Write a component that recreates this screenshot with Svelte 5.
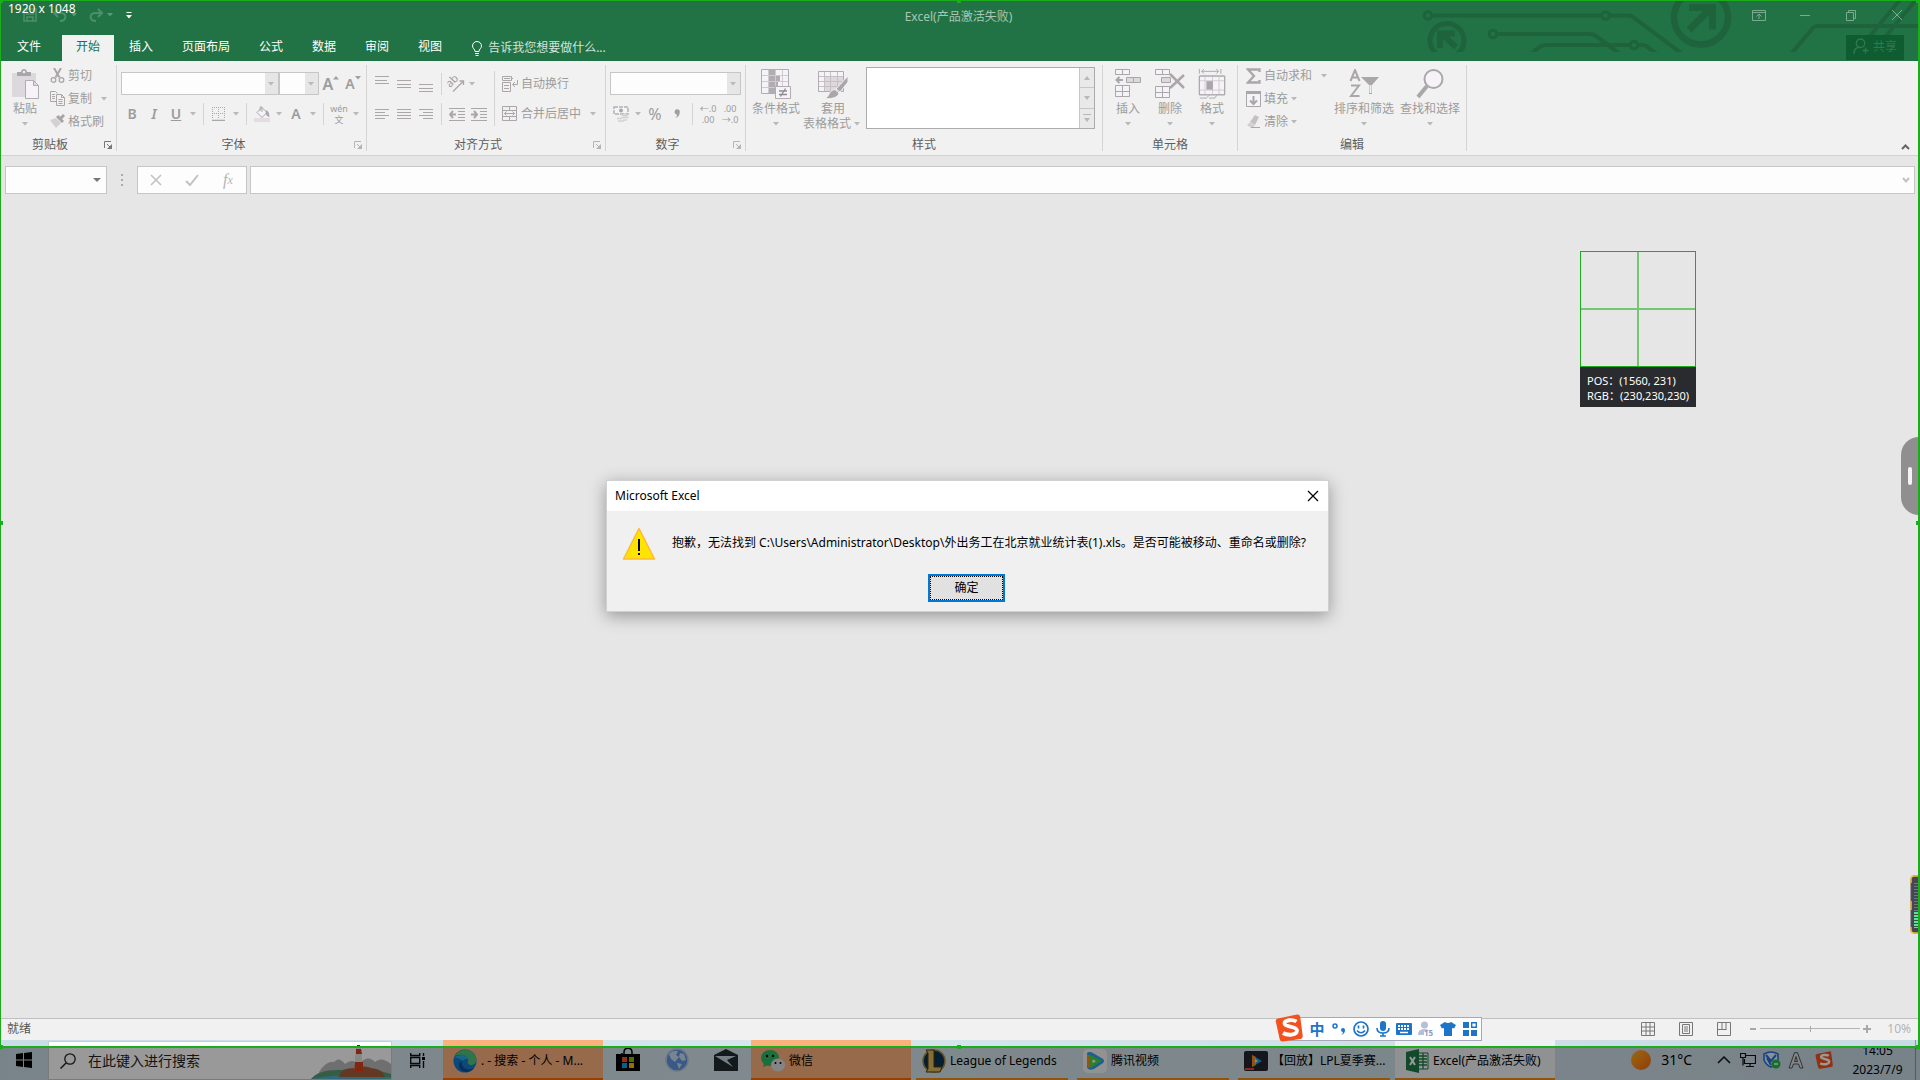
<script>
	const tabs = ['插入', '页面布局', '公式', '数据', '审阅', '视图'];

	let zoom = $state(50);
</script>

{#snippet caret()}
	<svg class="caret" width="12" height="4" viewBox="0 0 12 4"><path d="M3 0h6L6 3.6z" /></svg>
{/snippet}

{#snippet launcher(on)}
	<button class="launcher" class:on aria-label="对话框启动器">
		<svg width="8" height="8" viewBox="0 0 8 8"><path d="M.5 7V.5H7M3 3l3.5 3.5" /><path class="tip" d="M8 3v5H3z" /></svg>
	</button>
{/snippet}

{#snippet sogou(size)}
	<svg width={size} height={size} viewBox="0 0 28 28">
		<path d="M3 4.5 22 .6q2.600-.4 3.200 2.200l2.500 19q.3 2.600-2.200 3.200L8 27.500q-2.700.4-3.300-2.200L.8 7.500q-.4-2.500 2.200-3z" fill="#f4511e" />
		<path d="M21.500 7.500c-4-2.500-12-1.500-12 2 0 4 12.500 2 12.500 7 0 4.500-9 5.500-14 2.500" fill="none" stroke="#fff" stroke-width="3.800" />
	</svg>
{/snippet}

{#snippet lines(ys, xs = [0, 0, 0])}
	<svg width="14" height="22" viewBox="0 0 14 22" class="stroke">
		{#each ys as y, i}
			<path d="M{xs[i] < 0 ? -xs[i] : 0} {y}.5H{xs[i] > 0 ? 14 - xs[i] : 14}" />
		{/each}
	</svg>
{/snippet}

<div class="desktop">
	<div class="window">
		<header>
			<svg class="circuit" width="520" height="52" viewBox="0 0 520 52">
				<g fill="none" stroke="#1e633c" stroke-width="4">
					<circle cx="28" cy="15.500" r="3.800" stroke-width="3" />
					<path d="M32 15.500h169M210 15.500h18q4 0 7 3l48 36" />
					<circle cx="205.500" cy="15.500" r="3.800" stroke-width="3" />
					<circle cx="93" cy="34" r="3.800" stroke-width="3" />
					<path d="M97 34h92q4 0 7 2l24 18M131 54l7-6q4-3 8-3h84M238 45h4q4 0 7 3l8 6" />
					<circle cx="234" cy="45" r="3.800" stroke-width="3" />
					<circle cx="47" cy="40.500" r="17" stroke-width="5" />
					<path d="M56 47 42 34M40 48V33.500h15" stroke-width="6" />
					<circle cx="301" cy="17.500" r="27" stroke-width="6.500" />
					<path d="M289 30l22-22M289 7.500h23.500v22" stroke-width="7" />
					<path d="M391 54l21-25q2-3 6-3h102M470 36 500 0M486 36 516 0" />
				</g>
			</svg>
			<div class="titlebar">
				<div class="qat">
					<button aria-label="保存">
						<svg width="14" height="14" viewBox="0 0 14 14" class="dim"><path d="M1 1h12v12H1zM3.500 1v5h7V1M4 13V9h6v4" stroke-width="1.500" /></svg>
					</button>
					<button aria-label="撤消">
						<svg width="16" height="14" viewBox="0 0 16 14" class="dim"><path d="M6 1 2 5l4 4M2 5h7c6 0 6 8-1 8" stroke-width="2" /></svg>
						{@render caret()}
					</button>
					<button aria-label="恢复">
						<svg width="16" height="14" viewBox="0 0 16 14" class="dim"><path d="M10 1l4 4-4 4M14 5H7c-6 0-6 8 1 8" stroke-width="2" /></svg>
						{@render caret()}
					</button>
					<button class="customize" aria-label="自定义快速访问工具栏">
						<svg width="6" height="7" viewBox="0 0 6 7"><path d="M.5 0h5v1h-5zM0 3h6L3 6.500z" fill="#fff" /></svg>
					</button>
				</div>
				<h1>Excel(产品激活失败)</h1>
				<div class="controls">
					<button aria-label="功能区显示选项">
						<svg width="14" height="12" viewBox="0 0 14 12"><path d="M.5 1.500h13v10H.5zM.5 3.500h13M7 10V5M4.500 7.500 7 5l2.500 2.500" /></svg>
					</button>
					<button aria-label="最小化">
						<svg width="14" height="12" viewBox="0 0 14 12"><path d="M2 6.500h10" /></svg>
					</button>
					<button aria-label="向下还原">
						<svg width="14" height="12" viewBox="0 0 14 12"><path d="M2.500 3.500h7v8h-7zM4.500 3.500v-2h7v8h-2" /></svg>
					</button>
					<button aria-label="关闭">
						<svg width="14" height="12" viewBox="0 0 14 12"><path d="M2 1l10 10M12 1 2 11" /></svg>
					</button>
				</div>
			</div>
			<nav>
				<button class="tab file">文件</button>
				<button class="tab active">开始</button>
				{#each tabs as tab}
					<button class="tab">{tab}</button>
				{/each}
				<button class="tell">
					<svg width="12" height="15" viewBox="0 0 12 15"><path d="M4 10.500C4 8 1.500 7.500 1.500 5a4.500 4.500 0 0 1 9 0c0 2.500-2.500 3-2.500 5.500zM4 12.500h4M4.500 14.500h3" fill="none" stroke="#fff" /></svg>
					告诉我您想要做什么...
				</button>
				<button class="share">
					<svg width="16" height="17" viewBox="0 0 16 17"><path d="M7.500 1a4 4 0 0 1 0 8.500 4 4 0 0 1 0-8.500zM1 16c0-4 2-6.500 5-6.500M12.500 9.500v6M9.500 12.500h6" /></svg>
					共享
				</button>
			</nav>
		</header>

		<div class="ribbon">
			<section class="group clipboard">
				<div class="body">
					<button class="big" disabled>
						<svg width="30" height="30" viewBox="0 0 30 30">
							<path d="M2 4h24v24H2z" fill="#dcd8dc" />
							<path d="M7 7V3h4c0-4 6-4 6 0h4v4z" fill="#aaa6aa" /><circle cx="14" cy="3" r="1.300" fill="#f1f1f1" />
							<path d="M15.500 11.500h8l5 5v13h-13zM23.500 11.500v5h5" fill="#f6f3f8" stroke="#b0acb0" />
						</svg>
						<span>粘贴</span>
						<span class="drop-row">{@render caret()}</span>
					</button>
					<div class="stack">
						<button disabled>
							<svg width="15" height="15" viewBox="0 0 15 15" class="stroke"><path d="M4 0l5.500 9.500M11 0 5.500 9.500" stroke-width="2" /><circle cx="3.500" cy="12" r="2.300" stroke-width="1.300" /><circle cx="11.500" cy="12" r="2.300" stroke-width="1.300" /></svg>
							剪切
						</button>
						<button disabled>
							<svg width="15" height="15" viewBox="0 0 15 15" class="stroke"><path d="M6 10.500H.5V.5h5l2 2M2 3.500h3M2 5.500h3M2 7.500h3M6.500 3.500h5l3 3v8h-8zM11.500 3.500v3h3M8.500 8.500h4M8.500 10.500h4M8.500 12.500h4" /></svg>
							复制<span class="far">{@render caret()}</span>
						</button>
						<button disabled>
							<svg width="15" height="15" viewBox="0 0 15 15"><path d="M0 6l6-2 5 5-5 5z" fill="#d4d0d4" /><path d="M6 3l2.500-2L14 7l-2 2zM10 3l3-3 2 2-3 3z" fill="#a6a4a6" /></svg>
							格式刷
						</button>
					</div>
				</div>
				<footer><span>剪贴板</span>{@render launcher(true)}</footer>
			</section>

			<section class="group font">
				<div class="body">
					<div class="rows">
						<div class="row">
							<span class="combo family"><select aria-label="字体" disabled></select><i>{@render caret()}</i></span>
							<span class="combo size"><select aria-label="字号" disabled></select><i>{@render caret()}</i></span>
							<button class="tool grow" disabled><b>A</b><svg width="6" height="4" viewBox="0 0 6 4"><path d="M0 3.500h6L3 0z" /></svg></button>
							<button class="tool shrink" disabled><b>A</b><svg width="6" height="4" viewBox="0 0 6 4"><path d="M0 0h6L3 3.500z" /></svg></button>
						</div>
						<div class="row">
							<button class="tool" disabled><b>B</b></button>
							<button class="tool" disabled><em>I</em></button>
							<button class="tool" disabled><u>U</u></button>
							{@render caret()}
							<span class="sep"></span>
							<button class="tool" disabled aria-label="边框">
								<svg width="14" height="14" viewBox="0 0 14 14" class="stroke"><path d="M.5 0v12M6.500 0v12M12.500 0v12M0 .5h13M0 6.500h13" stroke-dasharray="1 1" /><path d="M0 13.500h13" stroke-width="1.500" /></svg>
							</button>
							{@render caret()}
							<span class="sep"></span>
							<button class="tool" disabled aria-label="填充颜色">
								<svg width="16" height="16" viewBox="0 0 16 16" class="stroke"><path d="M3 6.500l5-5 5 5-5 5zM8 6V1.500Q6.500-1 6 2v3" fill="#f6f3f8" /><path d="M12 4.500q3 1 3 6-3-1-3-4" fill="#aaa6aa" /><path d="M0 14h16" stroke="#e3dde3" stroke-width="4" /></svg>
							</button>
							{@render caret()}
							<button class="tool" disabled><b>A</b></button>
							{@render caret()}
							<span class="sep"></span>
							<button class="tool pinyin" disabled><span>wén</span><span>文</span></button>
							{@render caret()}
						</div>
					</div>
				</div>
				<footer><span>字体</span>{@render launcher(false)}</footer>
			</section>

			<section class="group align">
				<div class="body">
					<div class="rows">
						<div class="row">
							<button class="tool" disabled aria-label="顶端对齐">{@render lines([3, 7, 10], [0, 2, 0])}</button>
							<button class="tool" disabled aria-label="垂直居中">{@render lines([7, 11, 14])}</button>
							<button class="tool" disabled aria-label="底端对齐">{@render lines([11, 15, 18])}</button>
							<span class="sep"></span>
							<button class="tool narrow" disabled aria-label="方向">
								<svg width="18" height="16" viewBox="0 0 18 16" class="stroke"><path d="M6 15.500 16 5.500M12.500 5H16.500v4" stroke-width="1.300" /><text x="3" y="12" transform="rotate(-45 3 12)">ab</text></svg>
							</button>
							{@render caret()}
						</div>
						<div class="row">
							<button class="tool" disabled aria-label="左对齐">{@render lines([6, 9, 12, 15], [0, 4, 0, 4])}</button>
							<button class="tool" disabled aria-label="居中">{@render lines([6, 9, 12, 15])}</button>
							<button class="tool" disabled aria-label="右对齐">{@render lines([6, 9, 12, 15], [0, -4, 0, -4])}</button>
							<span class="sep"></span>
							<button class="tool" disabled aria-label="减少缩进量">
								<svg width="16" height="14" viewBox="0 0 16 14" class="stroke"><path d="M0 1.500h16M9 4.500h7M9 7.500h7M9 10.500h7M0 13.500h16" /><path d="M7 7.500H1M4 4 1 7.500 4 11" stroke-width="2" /></svg>
							</button>
							<button class="tool" disabled aria-label="增加缩进量">
								<svg width="16" height="14" viewBox="0 0 16 14" class="stroke"><path d="M0 1.500h16M9 4.500h7M9 7.500h7M9 10.500h7M0 13.500h16" /><path d="M0 7.500h6M3 4l3 3.500L3 11" stroke-width="2" /></svg>
							</button>
						</div>
					</div>
					<span class="sep tall"></span>
					<div class="rows wrap">
						<button class="row" disabled>
							<svg width="16" height="16" viewBox="0 0 16 16" class="stroke"><path d="M.5.500h9v4h-9zM2 2.500h6M.5 6.500h8v9h-8zM2 9.500h5M2 12.500h5M9 2.500h2M15.500 4v4.500H11M13 6l-2.500 2.500L13 11" /></svg>
							自动换行
						</button>
						<button class="row" disabled>
							<svg width="16" height="16" viewBox="0 0 16 16" class="stroke"><path d="M.5.500h14v14H.5zM.5 4.500h14M.5 10.500h14M7.500.500v4M7.500 10.500v4M2.500 7.500h10M4.500 5.500l-2 2 2 2M10.500 5.500l2 2-2 2" /></svg>
							合并后居中<span class="far">{@render caret()}</span>
						</button>
					</div>
				</div>
				<footer><span>对齐方式</span>{@render launcher(false)}</footer>
			</section>

			<section class="group number">
				<div class="body">
					<div class="rows">
						<div class="row">
							<span class="combo format"><select aria-label="数字格式" disabled></select><i>{@render caret()}</i></span>
						</div>
						<div class="row">
							<button class="tool" disabled aria-label="会计数字格式">
								<svg width="16" height="16" viewBox="0 0 16 16"><path d="M1 1h14v7H1z" fill="#f6f3f8" stroke="#b4b0b4" stroke-width="1.500" stroke-dasharray="4 1" /><circle cx="8" cy="4.500" r="2" fill="#aaa6aa" /><ellipse cx="12" cy="9" rx="3.500" ry="1.500" fill="#d4d0d4" /><path d="M8.500 11.500h7M4 12.500h5M5 15h6M10 14h4" stroke="#d4d0d4" stroke-width="1.500" /></svg>
							</button>
							{@render caret()}
							<button class="tool percent" disabled>%</button>
							<button class="tool" disabled aria-label="千位分隔样式">
								<svg width="6" height="9" viewBox="0 0 6 9"><path d="M1 9q2-1 2-3.500A2.600 2.600 0 1 1 5.800 3Q5.800 8 1 9z" fill="#a0a0a0" /></svg>
							</button>
							<span class="sep"></span>
							<button class="tool decimals" disabled><span>←.0</span><span>.00</span></button>
							<button class="tool decimals" disabled><span>.00</span><span>→.0</span></button>
						</div>
					</div>
				</div>
				<footer><span>数字</span>{@render launcher(false)}</footer>
			</section>

			<section class="group styles">
				<div class="body">
					<button class="big" disabled>
						<svg width="30" height="30" viewBox="0 0 30 30">
							<path d="M.5.500h27v24H.5z" fill="#f6f3f8" />
							<path d="M8 0h6v6h5v6h-2v6h-3v7H8z" fill="#b0acb0" />
							<path d="M.5 6.500h27M.5 12.500h27M.5 18.500h27M7.500 0v25M14.500 0v25M21.500 0v25" fill="none" stroke="#cfcbcf" />
							<path d="M.5.500h27v24H.5z" fill="none" stroke="#b0acb0" />
							<path d="M14.500 17.500h15v12h-15z" fill="#f6f3f8" stroke="#b0acb0" /><path d="M18 22h8M18 25.500h8M24.500 19.500l-5 8" stroke="#8c8c8c" stroke-width="1.300" />
						</svg>
						<span>条件格式</span>
						<span class="drop-row">{@render caret()}</span>
					</button>
					<button class="big table" disabled>
						<svg width="30" height="30" viewBox="0 0 30 30">
							<path d="M.5 2.500h25v20H.5z" fill="#f6f3f8" /><path d="M6 7h20v15H6z" fill="#dcd8dc" />
							<path d="M.5 7.500h25M.5 12.500h25M.5 17.500h25M6.500 2v20M12.500 2v20M19.500 2v20" fill="none" stroke="#c4c0c4" />
							<path d="M.5 2.500h25v20H.5z" fill="none" stroke="#b0acb0" />
							<path d="M30 7v6l-8 10-4-3zM17 20.500l4 3.500c-1 5-8 6-14 5.500 5-2 3-8 10-9z" fill="#aaa6aa" stroke="#f1f1f1" />
						</svg>
						<span>套用</span>
						<span class="drop-row">表格格式{@render caret()}</span>
					</button>
					<div class="gallery">
						<div class="preview"></div>
						<div class="scroller">
							<button disabled aria-label="上一行"><svg width="6" height="4" viewBox="0 0 6 4"><path d="M0 4h6L3 0z" /></svg></button>
							<button disabled aria-label="下一行"><svg width="6" height="4" viewBox="0 0 6 4"><path d="M0 0h6L3 4z" /></svg></button>
							<button disabled aria-label="其他"><svg width="8" height="8" viewBox="0 0 8 8"><path d="M0 0h8v1H0zM1 4h6L4 8z" /></svg></button>
						</div>
					</div>
				</div>
				<footer><span>样式</span></footer>
			</section>

			<section class="group cells">
				<div class="body">
					<button class="big" disabled>
						<svg width="28" height="30" viewBox="0 0 28 30" class="stroke"><path d="M1.500.500h14v5h-14zM8.500.500v5M1.500 16.500h14v11h-14zM8.500 16.500v11M1.500 22.500h14" fill="#f6f3f8" /><path d="M12.500 8.500h14v5h-14zM19.500 8.500v5" fill="#dcd8dc" /><path d="M9 11H3M5.500 8 2.500 11l3 3" stroke-width="2" /></svg>
						<span>插入</span>
						<span class="drop-row">{@render caret()}</span>
					</button>
					<button class="big" disabled>
						<svg width="30" height="30" viewBox="0 0 30 30" class="stroke"><path d="M.5.500h14v5H.5zM7.500.500v5M.5 17.500h14v11H.5zM7.500 17.500v11M.5 23.500h14" fill="#f6f3f8" /><path d="M6.500 8.500h9v5h-9z" fill="#dcd8dc" /><path d="M15 5l14 14M29 6 15 19" stroke-width="2.500" /></svg>
						<span>删除</span>
						<span class="drop-row">{@render caret()}</span>
					</button>
					<button class="big" disabled>
						<svg width="28" height="32" viewBox="0 0 28 32" class="stroke"><path d="M.5 0v5M23.500 0v5M3 2.500h18M5.500 0 3 2.500 5.500 5M18.500 0 21 2.500 18.500 5" /><path d="M.5 7.500h27v20H.5z" fill="#f6f3f8" /><path d="M.5 12.500h27M.5 22.500h27M6.500 7v21M14.500 7v21M21.500 7v21" stroke="#cfcbcf" /><path d="M.5 7.500h27v20H.5zM1 31h7l3-3M11 31h6l2-3" /><path d="M8 13h7v9H8z" fill="#aaa6aa" stroke="none" /></svg>
						<span>格式</span>
						<span class="drop-row">{@render caret()}</span>
					</button>
				</div>
				<footer><span>单元格</span></footer>
			</section>

			<section class="group editing">
				<div class="body">
					<div class="stack">
						<button disabled>
							<svg width="15" height="16" viewBox="0 0 15 16" class="stroke"><path d="M13.500 4V1.500H2L8 8l-6 6.500h11.500V12" stroke-width="2.300" /></svg>
							自动求和<span class="far">{@render caret()}</span>
						</button>
						<button disabled>
							<svg width="15" height="16" viewBox="0 0 15 16" class="stroke"><path d="M.5.500h14v15H.5z" fill="#f6f3f8" /><path d="M0 1.500h15" stroke-width="3" /><path d="M7.500 5v8M4 9.500l3.500 3.500L11 9.500" stroke-width="2" /></svg>
							填充<span>{@render caret()}</span>
						</button>
						<button disabled>
							<svg width="15" height="15" viewBox="0 0 15 15"><path d="M4 8 9 1l4 2-4 8z" fill="#c4c0c4" /><path d="M3.500 8.500 1 11l4 3h2l2-3" fill="#d4d0d4" /><path d="M5 13.500h9" stroke="#aaa6aa" /></svg>
							清除<span>{@render caret()}</span>
						</button>
					</div>
					<button class="big wide" disabled>
						<svg width="30" height="30" viewBox="0 0 30 30" class="stroke"><path d="M1.500 12 6 1l4.500 11M3 8.500h6M2 16.500h8L2 27h8.500" stroke-width="2" /><path d="M12 8h18l-7 8v9h-3v-9z" fill="#aaa6aa" stroke="none" /><path d="M21.500 16v8" stroke="#f1f1f1" stroke-width="2" /></svg>
						<span>排序和筛选</span>
						<span class="drop-row">{@render caret()}</span>
					</button>
					<button class="big wide" disabled>
						<svg width="28" height="30" viewBox="0 0 28 30" class="stroke"><circle cx="17.500" cy="10" r="9" fill="#f6f3f8" stroke-width="2" /><path d="M11 17 2 28" stroke-width="4" /></svg>
						<span>查找和选择</span>
						<span class="drop-row">{@render caret()}</span>
					</button>
				</div>
				<footer><span>编辑</span></footer>
			</section>
			<button class="collapse" aria-label="折叠功能区">
				<svg width="9" height="6" viewBox="0 0 9 6"><path d="M1 5l3.500-3.500L8 5" fill="none" stroke="#666" stroke-width="2" /></svg>
			</button>
		</div>

		<div class="formula">
			<label class="name-box">
				<input type="text" aria-label="名称框" />
				<svg width="8" height="4" viewBox="0 0 8 4"><path d="M0 0h8L4 4z" fill="#777" /></svg>
			</label>
			<span class="dots"><i></i><i></i><i></i></span>
			<div class="edit-tools">
				<button disabled aria-label="取消"><svg width="12" height="12" viewBox="0 0 12 12"><path d="M1 1l10 10M11 1 1 11" stroke-width="1.600" /></svg></button>
				<button disabled aria-label="输入"><svg width="14" height="12" viewBox="0 0 14 12"><path d="M1 7l4 4 8-10" stroke-width="2" /></svg></button>
				<button class="fx" disabled>f<sub>x</sub></button>
			</div>
			<label class="formula-box">
				<input type="text" aria-label="编辑栏" />
				<svg width="8" height="6" viewBox="0 0 8 6"><path d="M1 1l3 3.500L7 1" stroke-width="2" /></svg>
			</label>
		</div>

		<main></main>

		<div class="status">
			<span>就绪</span>
			<div class="views">
				<button aria-label="普通"><svg width="14" height="14" viewBox="0 0 14 14"><path d="M.5.500h13v13H.5zM.5 5h13M.5 9h13M5 .5v13M9 .5v13" /></svg></button>
				<button aria-label="页面布局"><svg width="14" height="14" viewBox="0 0 14 14"><path d="M.5.500h13v13H.5zM3.500 2.500h7v9h-7zM5 5h4M5 7h4M5 9h4" /></svg></button>
				<button aria-label="分页预览"><svg width="14" height="14" viewBox="0 0 14 14"><path d="M.5.500h13v13H.5zM5 .5v7M9 .5v7M.5 7.500h9" /></svg></button>
			</div>
			<button class="step" aria-label="缩小"><svg width="8" height="8" viewBox="0 0 8 8"><path d="M1 4h6" stroke-width="2" /></svg></button>
			<input type="range" aria-label="显示比例" bind:value={zoom} disabled />
			<button class="step" aria-label="放大"><svg width="8" height="8" viewBox="0 0 8 8"><path d="M0 4h8M4 0v8" stroke-width="2" /></svg></button>
			<span class="zoom">10%</span>
		</div>
	</div>

	<div class="taskbar">
		<button class="start" aria-label="开始">
			<svg width="16" height="16" viewBox="0 0 16 16"><path d="M0 2l7-1v6.500H0zM8 1l8-1v7.500H8zM0 8.500h7V15l-7-1zM8 8.500h8V16l-8-1z" /></svg>
		</button>
		<label class="search">
			<svg width="16" height="16" viewBox="0 0 16 16"><circle cx="10" cy="6" r="5.200" fill="none" stroke="#222" stroke-width="1.300" /><path d="M6 10l-5.500 5.500" stroke="#222" stroke-width="1.500" /></svg>
			<input type="text" placeholder="在此键入进行搜索" aria-label="搜索" />
			<svg class="scene" width="80" height="34" viewBox="0 0 80 34">
				<path d="M8 27q8-12 15-10 5-6 11 2 7-6 14 0 9-10 16-2 6-6 16 2v15H8z" fill="#b9b9b9" />
				<path d="M0 34q8-10 30-9 26-4 50 4v5z" fill="#5d9a72" />
				<path d="M0 34q20-6 80-2v2z" fill="#4fb0cc" />
				<path d="M28 32q2-10 18-9 8-3 14 0 12 1 14 9z" fill="#a5603c" />
				<path d="M45 3h5l2 22h-9z" fill="#e2e2e2" /><path d="M45 4h5l1 5h-6zM44 17h8v9h-9z" fill="#d8401c" /><path d="M46 0h3v3h-3z" fill="#333" />
			</svg>
		</label>
		<button class="view" aria-label="任务视图">
			<svg width="16" height="15" viewBox="0 0 16 15"><path d="M.7 0v2.500h9V0M.7 15v-2.500h9V15M.7 4.500h9v6h-9zM13.500 0v3M13.500 8v7" fill="none" stroke="#111" stroke-width="1.400" /><path d="M12 4h3v3h-3z" /></svg>
		</button>
		<button class="task alert">
			<svg width="24" height="24" viewBox="0 0 24 24"><circle cx="12" cy="12" r="11.500" fill="#1478c8" /><path d="M2 7C6 0 14-1 19 3c6 5 6 12 0 13-4 0-5-2-4-4 1-5-7-8-13-5z" fill="#4fc47a" /><path d="M1 9c5-5 14-3 15 2-2-2-5-1-6 1-3-2-6-4-9-3z" fill="#2aa8dc" /><path d="M9 12c-2 5 4 11 12 7-5 6-14 5-15-2 0-3 1-4 3-5z" fill="#0c50a0" /></svg>
			<span>. - 搜索 - 个人 - M...</span>
		</button>
		<button class="pin" aria-label="Microsoft Store">
			<svg width="24" height="24" viewBox="0 0 24 24"><path d="M8 7V4c0-5 8-5 8 0v3M6 7V5" fill="none" stroke="#000" stroke-width="1.500" /><path d="M0 6h24v17H0z" /><path d="M6 9h5v5H6z" fill="#f25022" /><path d="M13 9h5v5h-5z" fill="#7fba00" /><path d="M6 15h5v5H6z" fill="#00a4ef" /><path d="M13 15h5v5h-5z" fill="#ffb900" /></svg>
		</button>
		<button class="pin" aria-label="浏览器">
			<svg width="24" height="24" viewBox="0 0 24 24"><circle cx="12" cy="12" r="11" fill="#5f94e0" stroke="#b8c8dc" stroke-width="1.500" /><path d="M4 6q4-4 9-3l-2 4 3 2-4 5-4-3zM15 5l4 1 2 6-4 1-3-4zM12 15l5 1-3 5z" fill="#c8dcf4" /></svg>
		</button>
		<button class="pin" aria-label="邮件">
			<svg width="24" height="22" viewBox="0 0 24 22"><path d="M0 6l12-6 12 6v16H0z" fill="#222b30" /><path d="M1 7h21l-9 4 6 7-18-11z" fill="#c4d4dc" /></svg>
		</button>
		<div class="tasks">
			<button class="task alert">
				<svg width="24" height="24" viewBox="0 0 24 24"><ellipse cx="9" cy="9" rx="9" ry="8" fill="#2fb864" /><path d="M3 14l-1 4 5-2z" fill="#2fb864" /><circle cx="6" cy="7" r="1.200" /><circle cx="12" cy="7" r="1.200" /><ellipse cx="17" cy="16" rx="7" ry="6.500" fill="#ddd" /><circle cx="14.500" cy="14" r="1" /><circle cx="19.500" cy="14" r="1" /></svg>
				<span>微信</span>
			</button>
			<button class="task">
				<svg width="24" height="24" viewBox="0 0 24 24"><circle cx="12" cy="12" r="11" fill="#0b3450" stroke="#a88840" stroke-width="1.500" /><path d="M4 1h8v17h8l-2 5H4l2-3V4z" fill="#e0b860" stroke="#50380c" /></svg>
				<span>League of Legends</span>
			</button>
			<button class="task">
				<svg width="24" height="24" viewBox="0 0 24 24"><rect width="24" height="24" rx="5" fill="#f4f4f4" /><path d="M4 4q2-2 6 0l10 6q2 2 0 4l-9 6q-6 2-7-2z" fill="#28a0f0" /><path d="M4 5l7 4-4 10q-3 0-3-3z" fill="#ff8a1c" /><path d="M8 8l8 4-8 5z" fill="#fff" stroke="#50d048" stroke-width="3" /></svg>
				<span>腾讯视频</span>
			</button>
			<button class="task">
				<svg width="24" height="24" viewBox="0 0 24 24"><rect y="2" width="24" height="20" rx="2" fill="#232330" /><path d="M8 6l10 6-10 6z" fill="#1c9cf0" /><path d="M8 6l4 2v8l-4 2z" fill="#f08c28" /><path d="M11 10l3 2-3 2z" fill="#f4f470" /><path d="M1 20h9" stroke="#f04030" stroke-width="2" /></svg>
				<span>【回放】LPL夏季赛...</span>
			</button>
			<button class="task current">
				<svg width="24" height="24" viewBox="0 0 24 24"><path d="M12 4h11v16H12z" fill="#f4f8f4" stroke="#1f7a48" /><path d="M14 7h8M14 10h8M14 13h8M14 16h8M18 4v16" stroke="#1f7a48" stroke-width="1.300" /><path d="M1 3l13-3v24L1 21z" fill="#1f7a48" /><path d="M5 8l5 8M10 8l-5 8" stroke="#fff" stroke-width="2" /></svg>
				<span>Excel(产品激活失败)</span>
			</button>
		</div>
		<div class="tray">
			<button class="weather">
				<svg width="20" height="20" viewBox="0 0 20 20"><defs><linearGradient id="sun" x1="0" y1="0" x2="1" y2="1"><stop offset="0" stop-color="#ffb020" /><stop offset="1" stop-color="#f46410" /></linearGradient></defs><circle cx="10" cy="10" r="10" fill="url(#sun)" /></svg>
				31°C
			</button>
			<button aria-label="显示隐藏的图标"><svg width="14" height="8" viewBox="0 0 14 8"><path d="M1 7l6-6 6 6" fill="none" stroke="#111" stroke-width="1.500" /></svg></button>
			<button aria-label="网络"><svg width="16" height="14" viewBox="0 0 16 14"><path d="M5 2.500h10.500v8H4.500V6M10 10.500v3M6 13.500h8M.5.500h5v4h-5zM3 4.500v8" fill="none" stroke="#111" stroke-width="1.200" /></svg></button>
			<button aria-label="安全"><svg width="18" height="18" viewBox="0 0 18 18"><path d="M1 3q7-4 14 0v6q-2 5-7 7-5-2-7-7z" fill="#e8f0f8" stroke="#2870d8" stroke-width="1.600" /><path d="M3 4l5 6 5-6M4 7l4 7" fill="none" stroke="#2870d8" stroke-width="2" /><circle cx="13" cy="13" r="4.500" fill="#28b848" /><path d="M11 13h4" stroke="#fff" stroke-width="1.500" /></svg></button>
			<button aria-label="输入法"><svg width="16" height="17" viewBox="0 0 16 17"><path d="M6.500.700h3L15 16h-3l-1.500-4h-5L4 16H1zM6.500 9.500h3L8 4.500z" fill="#d8dee2" stroke="#555" /></svg></button>
			<button class="ime" aria-label="搜狗输入法">{@render sogou(18)}</button>
			<div class="clock"><span>14:05</span><span>2023/7/9</span></div>
			<button class="peek" aria-label="显示桌面"></button>
		</div>
	</div>

	<div class="dialog" role="alertdialog" aria-labelledby="dialog-title">
		<div class="dialog-title">
			<span id="dialog-title">Microsoft Excel</span>
			<button aria-label="关闭"><svg width="12" height="12" viewBox="0 0 12 12"><path d="M1 1l10 10M11 1 1 11" stroke="#000" stroke-width="1.200" /></svg></button>
		</div>
		<div class="message">
			<svg width="34" height="34" viewBox="0 0 34 34"><path d="M17 1.500 32.500 32h-31z" fill="#ffe400" stroke="#ffb93a" stroke-width="1.500" stroke-linejoin="round" /><path d="M16 12h2v12h-2zM16 26h2v2h-2z" /></svg>
			<p>抱歉，无法找到 C:\Users\Administrator\Desktop\外出务工在北京就业统计表(1).xls。是否可能被移动、重命名或删除?</p>
		</div>
		<button class="ok">确定</button>
	</div>

	<div class="picker">
		<div class="lens"></div>
		<p>POS：(1560, 231)</p>
		<p>RGB：(230,230,230)</p>
	</div>

	<div class="side-handle"><i></i></div>
	<svg class="meter" width="10" height="60" viewBox="0 0 10 60">
		<rect x="1" y="1" width="14" height="57" rx="3" fill="#454852" stroke="#555" />
		<path d="M1 8V4q0-3 3-3h6M1 26v9M1 52v3q0 3 3 3h6" fill="none" stroke="#f0b83c" stroke-width="1.500" />
		<path d="M7 8v29" stroke="#70758a" stroke-width="6" stroke-dasharray="1 2" />
		<path d="M7 37v16" stroke="#5ce09c" stroke-width="6" stroke-dasharray="2 1" />
	</svg>

	<div class="ime-bar">
		<span class="ime-logo">{@render sogou(28)}</span>
		<button class="cn">中</button>
		<button aria-label="标点"><svg width="14" height="14" viewBox="0 0 14 14"><circle cx="3" cy="4" r="2" fill="none" stroke="#1d74c8" stroke-width="1.500" /><path d="M9 13q2-1 2-3a2 2 0 1 1 2-2q0 4-4 5z" fill="#1d74c8" /></svg></button>
		<button aria-label="表情"><svg width="16" height="16" viewBox="0 0 16 16" fill="none" stroke="#1d74c8" stroke-width="1.700"><circle cx="8" cy="8" r="7" /><path d="M5.500 4.500v3M10.500 4.500v3M4 9.500q4 4.500 8 0" /></svg></button>
		<button aria-label="语音"><svg width="14" height="16" viewBox="0 0 14 16"><rect x="4" width="6" height="10" rx="3" fill="#1d74c8" /><path d="M1 7q0 5 6 5t6-5M7 12v3M4 15h6" fill="none" stroke="#1d74c8" stroke-width="1.600" /></svg></button>
		<button aria-label="软键盘"><svg width="16" height="12" viewBox="0 0 16 12"><rect width="16" height="12" rx="1" fill="#1d74c8" /><path d="M2 3h12M2 6h12" stroke="#fff" stroke-width="2" stroke-dasharray="2 1" /><path d="M4 9.500h8" stroke="#fff" stroke-width="1.500" /></svg></button>
		<button aria-label="账号"><svg width="16" height="16" viewBox="0 0 16 16"><circle cx="6.500" cy="4" r="3.500" fill="#b4bfd8" /><path d="M0 14q0-6 6-6 4 0 5 2H6v4z" fill="#b4bfd8" /><text x="6" y="15">15</text></svg></button>
		<button aria-label="皮肤"><svg width="16" height="14" viewBox="0 0 16 14"><path d="M5 0q3 2 6 0l5 3-2 3.500-2-.5v8H4V6l-2 .5L0 3z" fill="#1d74c8" /></svg></button>
		<button aria-label="工具箱"><svg width="14" height="14" viewBox="0 0 14 14"><path d="M0 0h6v6H0zM0 8h6v6H0zM8 8h6v6H8z" fill="#1d74c8" /><path d="M8.700.700h4.600v4.600H8.700z" fill="none" stroke="#1d74c8" stroke-width="1.400" /></svg></button>
	</div>

	<div class="shade"></div>
	<div class="frame">
		<span>1920 x 1048</span>
		<i class="n"></i><i class="s"></i><i class="w"></i><i class="e"></i><i class="nw"></i><i class="ne"></i><i class="sw"></i><i class="se"></i>
	</div>
</div>

<style>
	:global(body) {
		margin: 0;
	}

	.desktop {
		position: relative;
		display: flex;
		flex-direction: column;
		height: 100vh;
		overflow: hidden;
		font: 12px/16px 'Noto Sans', 'Noto Sans CJK SC', sans-serif;
		color: #000;
	}

	button,
	input,
	select {
		font: inherit;
		color: inherit;
		margin: 0;
		padding: 0;
		border: 0;
		background: none;
		border-radius: 0;
		outline: 0;
		appearance: none;
	}

	button {
		display: flex;
		align-items: center;
		justify-content: center;
		white-space: nowrap;
	}

	svg {
		flex: none;
		display: block;
	}

	p {
		margin: 0;
		white-space: nowrap;
	}

	.window {
		flex: 1;
		display: flex;
		flex-direction: column;
		background: #e6e6e6;
	}

	/* title bar and tabs */
	header {
		position: relative;
		background: #217346;
		color: #fff;
	}

	.circuit {
		position: absolute;
		top: 0;
		right: 0;
	}

	.titlebar {
		position: relative;
		display: grid;
		grid-template-columns: 1fr auto 1fr;
		height: 35px;
	}

	.qat {
		display: flex;
		align-items: center;
		height: 30px;
		padding-left: 15px;
		gap: 6px;
		--caret: #5a9876;
	}

	.qat button {
		width: 30px;
	}

	.qat .customize {
		width: 12px;
	}

	.dim {
		fill: none;
		stroke: #4d8f6b;
	}

	h1 {
		margin: 0;
		padding-right: 3px;
		font-size: 12px;
		line-height: 33px;
		font-weight: 400;
		color: #a6c7b5;
	}

	.controls {
		display: flex;
		justify-content: flex-end;
		height: 30px;
	}

	.controls button {
		width: 46px;
	}

	.controls svg {
		fill: none;
		stroke: #7aab90;
	}

	nav {
		position: relative;
		display: flex;
		height: 26px;
		gap: 1px;
	}

	.tab {
		padding: 0 14px 2px;
	}

	.file {
		padding: 0 20px 2px 17px;
	}

	.active {
		background: #f1f1f1;
		color: #217346;
	}

	.tell {
		padding-left: 14px;
		gap: 5px;
		color: #d3e3da;
	}

	.share {
		height: 25px;
		width: 58px;
		margin: 0 16px 0 auto;
		gap: 4px;
		padding-bottom: 2px;
		background: #0e5c2f;
		color: #2f7a50;
	}

	.share svg {
		fill: none;
		stroke: #2f7a50;
		stroke-width: 1.3;
	}

	/* ribbon */
	.ribbon {
		display: flex;
		padding: 4px 0;
		background: #f1f1f1;
		border-bottom: 1px solid #d2d2d2;
		color: #9c9c9c;
	}

	.group {
		box-sizing: border-box;
		display: flex;
		flex-direction: column;
		height: 86px;
		border-right: 1px solid #d4d4d4;
	}

	.clipboard {
		width: 117px;
	}
	.font {
		width: 250px;
	}
	.align {
		width: 239px;
	}
	.number {
		width: 140px;
	}
	.styles {
		width: 357px;
	}
	.cells {
		width: 135px;
	}
	.editing {
		width: 229px;
	}

	.body {
		display: flex;
		flex: 1;
		padding-left: 4px;
		align-items: flex-start;
	}

	footer {
		display: flex;
		height: 12px;
		line-height: 12px;
		color: #5e5e5e;
	}

	footer span {
		flex: 1;
		text-align: center;
	}

	.launcher {
		width: 16px;
	}

	.launcher svg {
		fill: none;
		stroke: #b4b4b4;
	}

	.launcher .tip {
		fill: #b4b4b4;
		stroke: none;
	}

	.launcher.on svg {
		stroke: #777;
	}

	.launcher.on .tip {
		fill: #777;
	}

	.caret {
		fill: var(--caret, #b8b8b8);
	}

	.big {
		flex-direction: column;
		justify-content: flex-start;
		width: 42px;
		padding-top: 4px;
		line-height: 15px;
	}

	.big > svg {
		height: 30px;
		margin-bottom: 2px;
	}

	.drop-row {
		display: flex;
		align-items: center;
		height: 15px;
	}

	.big.wide {
		width: 66px;
	}

	.styles .big {
		width: 52px;
	}

	.styles .table {
		width: 62px;
	}

	.stack {
		display: flex;
		flex-direction: column;
	}

	.stack button {
		height: 23px;
		padding: 0 0 2px 4px;
		gap: 3px;
		justify-content: flex-start;
	}

	.editing .stack {
		width: 89px;
	}

	.stack span,
	.wrap span {
		margin-left: -3px;
	}

	.stack .far,
	.wrap .far {
		margin-left: 3px;
	}

	.stroke {
		fill: none;
		stroke: #aaa6aa;
	}

	.stroke text {
		font-size: 11px;
		fill: #9c9c9c;
		stroke: none;
	}

	.rows {
		display: flex;
		flex-direction: column;
		gap: 7px;
		padding-top: 7px;
	}

	.row {
		display: flex;
		align-items: center;
		height: 23px;
	}

	.wrap {
		padding-left: 3px;
	}

	.wrap .row {
		justify-content: flex-start;
		gap: 3px;
	}

	.tool {
		width: 22px;
		height: 22px;
		flex: none;
	}

	.tool.narrow {
		width: 20px;
	}

	.tool b,
	.tool em,
	.tool u {
		font-size: 14px;
		font-weight: 600;
	}

	.grow b {
		font-size: 16px;
	}

	.grow svg,
	.shrink svg {
		align-self: flex-start;
		margin-top: 3px;
		fill: #a0a0a0;
	}

	.pinyin,
	.decimals {
		flex-direction: column;
		font-size: 9px;
		line-height: 11px;
	}

	.percent {
		font-size: 16px;
	}

	.sep {
		width: 1px;
		height: 22px;
		margin: 0 4px;
		background: #d4d4d4;
	}

	.sep.tall {
		height: 55px;
		margin-top: 6px;
	}

	.combo {
		box-sizing: border-box;
		display: flex;
		height: 23px;
		border: 1px solid #c6c6c6;
		background: #fdfdfd;
	}

	.combo select {
		flex: 1;
		min-width: 0;
		opacity: 1;
	}

	.combo i {
		display: flex;
		align-items: center;
		width: 13px;
		background: #e6e6e6;
	}

	.family {
		width: 158px;
	}
	.size {
		width: 40px;
		margin-right: 1px;
	}
	.format {
		width: 131px;
	}

	.gallery {
		box-sizing: border-box;
		display: flex;
		width: 229px;
		height: 62px;
		margin: 2px 0 0 2px;
		border: 1px solid #ababab;
		background: #fff;
	}

	.preview {
		flex: 1;
	}

	.scroller {
		display: grid;
		grid-template-rows: repeat(3, 1fr);
		gap: 1px;
		width: 14px;
		border-left: 1px solid #c6c6c6;
		background: #c6c6c6;
	}

	.scroller button {
		background: #e9e9e9;
	}

	.scroller svg {
		fill: #b8b8b8;
	}

	.collapse {
		align-self: flex-end;
		margin: 0 10px 1px auto;
	}

	/* formula bar */
	.formula {
		display: flex;
		padding: 10px 5px 0;
	}

	.name-box,
	.edit-tools,
	.formula-box {
		box-sizing: border-box;
		display: flex;
		align-items: center;
		height: 28px;
		border: 1px solid #c6c6c6;
		background: #fdfdfd;
	}

	.name-box {
		width: 102px;
		padding-right: 5px;
	}

	.formula input {
		flex: 1;
		min-width: 0;
	}

	.edit-tools svg,
	.formula-box svg {
		fill: none;
		stroke: #c2c2c2;
	}

	.dots {
		display: flex;
		flex-direction: column;
		align-items: center;
		justify-content: center;
		gap: 3px;
		width: 30px;
	}

	.dots i {
		width: 2px;
		height: 2px;
		background: #aaa;
	}

	.edit-tools {
		width: 110px;
		margin-right: 3px;
	}

	.edit-tools button {
		flex: 1;
	}

	.fx {
		font: italic 16px 'Liberation Serif', serif;
		color: #b4b4b4;
	}

	.fx sub {
		font-size: 12px;
	}

	.formula-box {
		flex: 1;
		padding-right: 4px;
	}

	main {
		flex: 1;
	}

	/* status bar */
	.status {
		display: flex;
		align-items: center;
		height: 19px;
		padding: 0 9px 2px 7px;
		background: #f1f1f1;
		border-top: 1px solid #c0c0c0;
		color: #555;
	}

	.views {
		display: flex;
		margin: 0 3px 0 auto;
	}

	.views button {
		width: 38px;
	}

	.status svg {
		fill: none;
		stroke: #777;
	}

	.status .step svg {
		stroke: #a8a8a8;
	}

	.step {
		width: 14px;
	}

	input[type='range'] {
		width: 100px;
		height: 16px;
		background: linear-gradient(#b4b4b4, #b4b4b4) center / 100% 1px no-repeat;
	}

	input[type='range']::-webkit-slider-thumb {
		appearance: none;
		width: 1px;
		height: 6px;
		background: #a8a8a8;
	}

	.zoom {
		margin-left: 13px;
		color: #b4b4b4;
	}

	/* taskbar */
	.taskbar {
		display: flex;
		height: 40px;
		background: linear-gradient(90deg, #cadce6, #d6e6ec 40%, #c8dae4);
	}

	.start {
		width: 48px;
	}

	.search {
		box-sizing: border-box;
		display: flex;
		align-items: center;
		width: 344px;
		height: 39px;
		margin-top: 1px;
		padding-left: 11px;
		border: 1px solid #ccc;
		background: #fff;
	}

	.search input {
		flex: 1;
		min-width: 0;
		padding-left: 12px;
		font-size: 14px;
	}

	.search input::placeholder {
		color: #222;
		opacity: 1;
	}

	.scene {
		align-self: flex-end;
	}

	.view {
		width: 51px;
	}

	.pin {
		width: 49px;
	}

	.tasks {
		display: flex;
		gap: 1px;
		margin-left: 1px;
	}

	.task {
		position: relative;
		width: 160px;
		padding: 1px 0 0 10px;
		gap: 4px;
		justify-content: flex-start;
	}

	.task::after {
		content: '';
		position: absolute;
		inset: auto 4px 0;
		height: 2px;
		background: #ee8c1c;
	}

	.alert {
		background: #fab17c;
	}

	.alert::after,
	.current::after {
		inset: auto 0 0;
	}

	.alert::after {
		background: #ff6c00;
	}

	.current {
		background: #eef2f4;
	}

	.tray {
		display: flex;
		margin-left: auto;
	}

	.tray button {
		width: 24px;
	}

	.tray .weather {
		width: auto;
		gap: 10px;
		margin-right: 20px;
		font-size: 14px;
	}

	.tray .ime {
		width: 32px;
	}

	.clock {
		display: flex;
		flex-direction: column;
		align-items: center;
		gap: 3px;
		width: 75px;
		padding-top: 3px;
	}

	.tray .peek {
		width: 5px;
		border-left: 1px solid #8b98a0;
	}

	/* floating windows */
	.dialog {
		position: absolute;
		left: 606px;
		top: 480px;
		box-sizing: border-box;
		width: 723px;
		height: 132px;
		border: 1px solid #d0d0d0;
		background: #f0f0f0;
		box-shadow: 0 4px 16px rgba(0, 0, 0, 0.35);
	}

	.dialog-title {
		display: flex;
		align-items: center;
		justify-content: space-between;
		height: 30px;
		padding: 0 9px 0 8px;
		background: #fff;
	}

	.message {
		display: flex;
		align-items: flex-start;
		gap: 16px;
		padding: 16px 0 0 15px;
	}

	.message p {
		padding-top: 8px;
	}

	.ok {
		box-sizing: border-box;
		width: 77px;
		height: 28px;
		margin: 13px 0 0 321px;
		border: 2px solid #0078d7;
		background: #e1e1e1;
		outline: 1px dotted #000;
		outline-offset: -3px;
	}

	.picker {
		position: absolute;
		left: 1580px;
		top: 251px;
		width: 116px;
		height: 156px;
		background: #2a2b2f;
		color: #fff;
		font-size: 11px;
		line-height: 15px;
	}

	.lens {
		box-sizing: border-box;
		height: 116px;
		margin-bottom: 6px;
		border: 1px solid #1cad1c;
		background:
			linear-gradient(#73c773, #73c773) center / 2px 100% no-repeat,
			linear-gradient(#73c773, #73c773) center / 100% 2px no-repeat,
			#e6e6e6;
	}

	.picker p {
		padding-left: 7px;
	}

	.side-handle {
		position: absolute;
		right: 0;
		top: 437px;
		display: flex;
		align-items: center;
		width: 19px;
		height: 78px;
		border-radius: 18px 0 0 18px;
		background: #8f8f8f;
	}

	.side-handle i {
		width: 4px;
		height: 18px;
		margin-left: 7px;
		border-radius: 2px;
		background: #f4f4f4;
	}

	.meter {
		position: absolute;
		right: 0;
		top: 875px;
	}

	.ime-bar {
		position: absolute;
		left: 1289px;
		bottom: 39px;
		box-sizing: border-box;
		display: flex;
		align-items: center;
		height: 24px;
		width: 193px;
		padding-left: 16px;
		border: 1px solid #a4a8b8;
		background: #fff;
	}

	.ime-bar button {
		width: 22px;
	}

	.ime-logo {
		position: absolute;
		left: -15px;
		top: -4px;
	}

	.ime-bar .cn {
		font-size: 15px;
		font-weight: 700;
		color: #1d74c8;
	}

	.ime-bar text {
		font-size: 8px;
		font-weight: 700;
		fill: #8d9cc0;
	}

	/* capture selection */
	.shade {
		position: absolute;
		inset: auto 0 0;
		height: 32px;
		background: rgba(0, 0, 0, 0.4);
		pointer-events: none;
	}

	.frame {
		position: absolute;
		inset: 0 0 32px;
		border: solid #1cad1c;
		border-width: 1px 2px 2px 1px;
		color: #fff;
		pointer-events: none;
	}

	.frame span {
		padding-left: 7px;
	}

	.frame i {
		position: absolute;
		width: 4px;
		height: 4px;
		background: #1cad1c;
	}

	.n,
	.nw,
	.ne {
		top: -2px;
	}
	.s,
	.sw,
	.se {
		bottom: -3px;
	}
	.n,
	.s {
		left: calc(50% - 3px);
	}
	.w,
	.nw,
	.sw {
		left: -2px;
	}
	.e,
	.ne,
	.se {
		right: -2px;
	}
	.w,
	.e {
		top: calc(50% - 3px);
	}
</style>
